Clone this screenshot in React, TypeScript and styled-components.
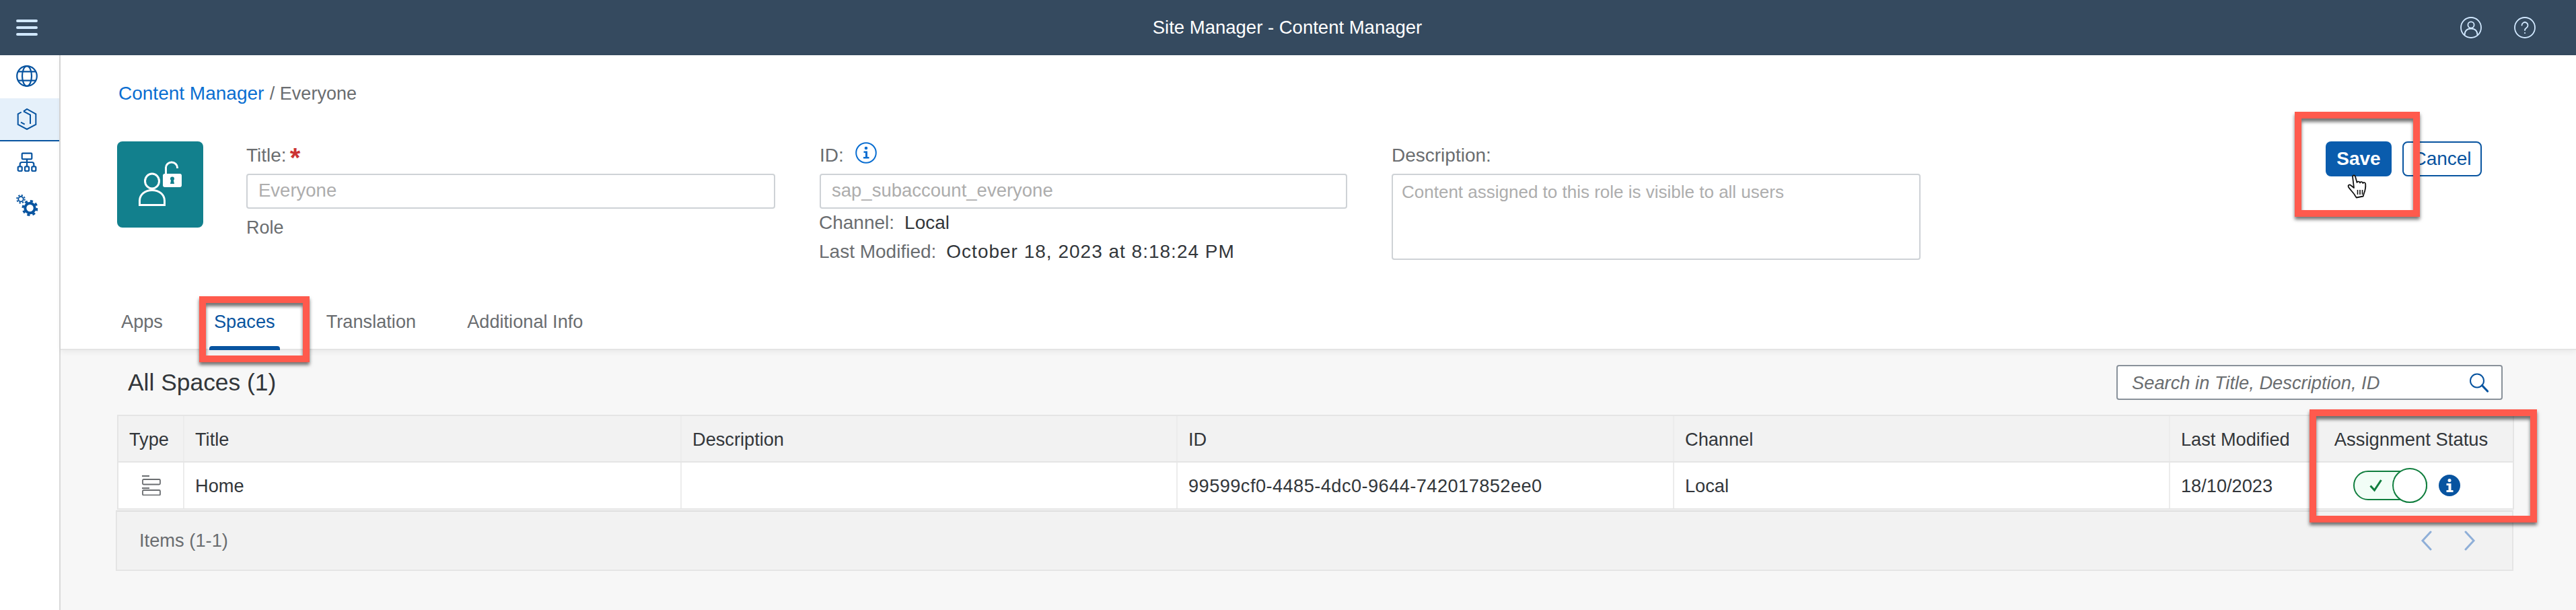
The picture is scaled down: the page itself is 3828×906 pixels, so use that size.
import React from "react";
import styled, { createGlobalStyle } from "styled-components";

const GlobalStyle = createGlobalStyle`
  html, body { margin: 0; padding: 0; background: #f7f7f7; }
  body { font-family: "Liberation Sans", Arial, sans-serif; color: #32363a; }
  * { box-sizing: border-box; }
`;

const COLUMNS = "98px 739px 737px 738px 737px 209px 302px";

const Page = styled.div`
  position: relative;
  width: 3828px;
  height: 906px;
  overflow: hidden;
  display: flex;
  flex-direction: column;
`;
const ShellBar = styled.header`
  flex: none;
  height: 82px;
  background: #354a5f;
  display: grid;
  grid-template-columns: 1fr auto 1fr;
  align-items: center;
  padding: 0 60px 0 24px;
`;
const ShellTitle = styled.div`
  text-align: center;
  font-size: 27.5px;
  color: #ffffff;
  padding-left: 34px;
`;
const ShellStart = styled.div`
  display: flex;
`;
const ShellIcons = styled.div`
  display: flex;
  justify-content: flex-end;
  gap: 48px;
`;
const Body = styled.div`
  flex: 1;
  display: flex;
  min-height: 0;
`;
const SideNav = styled.nav`
  flex: none;
  width: 90px;
  background: #fff;
  border-right: 2px solid #d9d9d9;
  display: flex;
  flex-direction: column;
`;
const NavItem = styled.div<{ $active?: boolean }>`
  height: 64px;
  display: flex;
  align-items: center;
  justify-content: center;
  padding-right: 8px;
  background: ${(p) => (p.$active ? "#e5f0fa" : "#fff")};
  border-bottom: 2px solid ${(p) => (p.$active ? "#0854a0" : "transparent")};
`;
const Main = styled.main`
  flex: 1;
  display: flex;
  flex-direction: column;
  min-width: 0;
`;
const TopSection = styled.section`
  flex: none;
  height: 438px;
  background: #fff;
  border-bottom: 2px solid #e4e4e4;
  box-shadow: 0 3px 8px rgba(0, 0, 0, 0.06);
  padding: 37px 140px 0 84px;
  display: flex;
  flex-direction: column;
  position: relative;
  z-index: 1;
`;
const Breadcrumb = styled.div`
  height: 40px;
  line-height: 40px;
  font-size: 27px;
  color: #6a6d70;
  padding-left: 2px;
`;
const CrumbLink = styled.span`
  color: #0a6ed1;
  font-size: 28px;
  margin-right: 1px;
`;
const FormRow = styled.div`
  margin-top: 51px;
  display: flex;
  align-items: flex-start;
`;
const Avatar = styled.div`
  flex: none;
  width: 128px;
  height: 128px;
  border-radius: 8px;
  background: #12808d;
  margin-right: 64px;
`;
const Field = styled.div<{ $w: number; $mr: number }>`
  flex: none;
  width: ${(p) => p.$w}px;
  margin-right: ${(p) => p.$mr}px;
  display: flex;
  flex-direction: column;
`;
const Label = styled.div`
  height: 40px;
  line-height: 40px;
  font-size: 28px;
  color: #6a6d70;
  margin-bottom: 8px;
  padding-top: 1px;
  display: flex;
  align-items: center;
`;
const Star = styled.span`
  color: #cc3333;
  font-weight: 700;
  font-size: 40px;
  line-height: 40px;
  margin-left: 5px;
  padding-top: 6px;
`;
const InfoWrap = styled.span`
  display: inline-flex;
  margin: -8px 0 0 17px;
`;
const InputBox = styled.div<{ $tall?: boolean }>`
  height: ${(p) => (p.$tall ? "128px" : "52px")};
  border: 2px solid #ced2d6;
  border-radius: 4px;
  background: #fff;
  padding: ${(p) => (p.$tall ? "6px 13px" : "0 16px")};
  font-size: ${(p) => (p.$tall ? "26px" : "27.5px")};
  line-height: ${(p) => (p.$tall ? "38px" : "46px")};
  color: #adadad;
  white-space: nowrap;
`;
const Caption = styled.div`
  margin-top: 8px;
  height: 40px;
  line-height: 40px;
  font-size: 27px;
  color: #6a6d70;
`;
const MetaLine = styled.div<{ $gap: number }>`
  margin-top: ${(p) => p.$gap}px;
  height: 40px;
  line-height: 42px;
  font-size: 28px;
  color: #6a6d70;
  white-space: nowrap;
  margin-left: -1px;
`;
const MetaValue = styled.span<{ $wide?: boolean }>`
  color: #32363a;
  margin-left: 15px;
  font-size: 28px;
  letter-spacing: ${(p) => (p.$wide ? "1px" : "0")};
`;
const Actions = styled.div`
  margin-left: auto;
  display: flex;
  gap: 16px;
`;
const SaveButton = styled.button`
  width: 98px;
  height: 52px;
  border: none;
  border-radius: 8px;
  background: #0a5cad;
  color: #fff;
  font: 700 28px "Liberation Sans", Arial, sans-serif;
  padding: 0;
`;
const CancelButton = styled.button`
  width: 118px;
  height: 52px;
  border: 2px solid #0854a0;
  border-radius: 8px;
  background: #fff;
  color: #0854a0;
  font: 400 28px "Liberation Sans", Arial, sans-serif;
  padding: 0;
`;
const TabBar = styled.div`
  position: absolute;
  left: 83px;
  bottom: 0;
  display: flex;
  gap: 62px;
`;
const Tab = styled.div<{ $active?: boolean }>`
  position: relative;
  height: 87px;
  padding: 27px 7px 0;
  font-size: 27.2px;
  line-height: 40px;
  color: ${(p) => (p.$active ? "#0854a0" : "#6a6d70")};
  ${(p) =>
    p.$active &&
    `&::after {
      content: "";
      position: absolute;
      left: 0;
      right: 0;
      bottom: -2px;
      height: 6px;
      background: #0854a0;
      border-radius: 4px 4px 0 0;
    }`}
`;
const Content = styled.section`
  flex: 1;
  background: #f7f7f7;
  padding: 22px 94px 0 84px;
`;
const Toolbar = styled.div`
  height: 52px;
  display: flex;
  align-items: center;
  justify-content: space-between;
  padding: 0 15px 0 16px;
  margin-bottom: 22px;
`;
const ListTitle = styled.h2`
  margin: 0;
  font-size: 35.4px;
  font-weight: 400;
  color: #32363a;
`;
const SearchBox = styled.div`
  width: 574px;
  height: 52px;
  border: 2px solid #89919a;
  border-radius: 4px;
  background: #fff;
  display: flex;
  align-items: center;
  justify-content: space-between;
  padding: 1px 18px 0 21px;
  font-size: 27.3px;
  font-style: italic;
  color: #6a6d70;
`;
const Table = styled.div`
  width: 3560px;
  border-top: 2px solid #e5e5e5;
  border-left: 2px solid #e5e5e5;
`;
const Row = styled.div<{ $head?: boolean }>`
  display: grid;
  grid-template-columns: ${COLUMNS};
  height: ${(p) => (p.$head ? "69px" : "70px")};
  margin-right: -2px;
  background: ${(p) => (p.$head ? "#f2f2f2" : "#fff")};
  border-bottom: 2px solid #e5e5e5;
`;
const Cell = styled.div<{ $last?: boolean; $center?: boolean; $wide?: boolean }>`
  display: flex;
  align-items: center;
  justify-content: ${(p) => (p.$center ? "center" : "flex-start")};
  padding: 2px 0 0 16px;
  font-size: 27.2px;
  letter-spacing: ${(p) => (p.$wide ? "0.45px" : "0")};
  color: #32363a;
  white-space: nowrap;
  border-right: 2px solid ${(p) => (p.$last ? "#e5e5e5" : "#ececec")};
`;
const StatusHead = styled(Cell)`
  padding: 2px 2px 0 0;
  font-size: 27.4px;
`;
const StatusCell = styled(Cell)`
  padding: 0 0 0 63px;
  gap: 17px;
`;
const IconCell = styled(Cell)`
  padding: 0 0 0 2px;
`;
const Toggle = styled.div`
  position: relative;
  width: 110px;
  height: 44px;
  margin-right: 0;
  border: 2px solid #107e3e;
  border-radius: 22px;
  background: #f1fdf6;
  display: flex;
  align-items: center;
  padding-left: 22px;
`;
const ToggleKnob = styled.div`
  position: absolute;
  right: -2px;
  top: -6px;
  width: 52px;
  height: 52px;
  border-radius: 50%;
  border: 2px solid #107e3e;
  background: #fff;
`;
const TableFooter = styled.div`
  width: 3563px;
  margin-left: -2px;
  height: 90px;
  margin-top: 1px;
  background: #f2f2f2;
  border: 2px solid #e5e5e5;
  border-top-color: #dedede;
  display: flex;
  align-items: center;
  justify-content: space-between;
  padding: 0 54px 0 33px;
  font-size: 27.3px;
  color: #6a6d70;
`;
const Pager = styled.div`
  display: flex;
  gap: 46px;
`;
const Highlight = styled.div<{ $x: number; $y: number; $w: number; $h: number }>`
  position: absolute;
  left: ${(p) => p.$x}px;
  top: ${(p) => p.$y}px;
  width: ${(p) => p.$w}px;
  height: ${(p) => p.$h}px;
  border: 10px solid #ff5a4d;
  box-shadow: 0 4px 5px rgba(0, 0, 0, 0.55), inset 0 5px 5px rgba(0, 0, 0, 0.55);
  z-index: 5;
  pointer-events: none;
`;
const Pointer = styled.svg`
  position: absolute;
  left: 3487px;
  top: 259px;
  z-index: 6;
`;

const blue = "#0854a0";
const pale = "#d1e8ff";

const Hamburger = () => (
  <svg width="32" height="24" viewBox="0 0 32 24" fill="none" stroke={pale} strokeWidth="4" strokeLinecap="round">
    <path d="M2 2h28M2 12h28M2 22h28" />
  </svg>
);
const PersonIcon = () => (
  <svg width="32" height="32" viewBox="0 0 32 32" fill="none" stroke={pale} strokeWidth="1.8">
    <circle cx="16" cy="16" r="15" />
    <circle cx="16" cy="12" r="4.6" />
    <path d="M6.5 27c0-6 3.5-9.5 9.5-9.5s9.5 3.5 9.5 9.5" />
  </svg>
);
const HelpIcon = () => (
  <svg width="32" height="32" viewBox="0 0 32 32" fill="none" stroke={pale} strokeWidth="1.8" strokeLinecap="round">
    <circle cx="16" cy="16" r="15" />
    <path d="M11.5 12.5a4.5 4.5 0 1 1 7 3.8c-1.7 1.1-2.5 2-2.5 3.7" />
    <circle cx="16" cy="24" r="1.1" fill={pale} stroke="none" />
  </svg>
);
const GlobeIcon = () => (
  <svg width="32" height="32" viewBox="0 0 32 32" fill="none" stroke={blue} strokeWidth="2.2">
    <circle cx="16" cy="16" r="14.8" />
    <ellipse cx="16" cy="16" rx="7" ry="14.8" />
    <path d="M2.8 9.4h26.4M2.8 22.6h26.4" />
  </svg>
);
const PackageIcon = () => (
  <svg width="32" height="32" viewBox="0 0 32 32" fill="none" stroke={blue} strokeWidth="2">
    <path d="M11 4.3 16 1l13.3 7.4v15.4L16 31 2.7 23.8V8.4l5-2.9" />
    <path d="M11 4.3 21 9.7V23M7 20.7l5.7 3" />
  </svg>
);
const OrgIcon = () => (
  <svg width="32" height="32" viewBox="0 0 32 32" fill="none" stroke={blue} strokeWidth="2.2" strokeLinejoin="round">
    <rect x="8.7" y="2.7" width="14.6" height="8.6" rx="1" />
    <path d="M16 11.3V22M5.7 22v-3a3 3 0 0 1 3-3h14.6a3 3 0 0 1 3 3v3" />
    <rect x="2.7" y="22.3" width="6" height="6.7" rx="1.5" />
    <rect x="13" y="22.3" width="6" height="6.7" rx="1.5" />
    <rect x="23.3" y="22.3" width="6" height="6.7" rx="1.5" />
  </svg>
);
const GearsIcon = () => (
  <svg width="32" height="32" viewBox="0 0 32 32" fill="none" stroke={blue}>
    <circle cx="20.5" cy="20" r="7.2" strokeWidth="4" />
    <circle cx="20.5" cy="20" r="10.4" strokeWidth="3.2" strokeDasharray="4.1 4.07" />
    <circle cx="7" cy="6.7" r="3.7" strokeWidth="1.9" />
    <circle cx="7" cy="6.7" r="5.8" strokeWidth="2" strokeDasharray="2.3 2.25" />
  </svg>
);
const RoleGlyph = () => (
  <svg width="128" height="128" viewBox="0 0 128 128" fill="none" stroke="#fff" strokeWidth="3">
    <ellipse cx="52" cy="59" rx="10.5" ry="11" />
    <path d="M33.5 94.5V88c0-9 8-15.5 18.5-15.5S70.500 79 70.500 88v6.500z" />
    <path d="M72.500 48v-9a8.500 8 0 0 1 17 0v1" />
    <rect x="68" y="48" width="28" height="20" rx="3" fill="#fff" stroke="none" />
    <circle cx="82" cy="55.500" r="3" fill="#12808d" stroke="none" />
    <path d="M80.500 56h3l1.500 7h-6z" fill="#12808d" stroke="none" />
  </svg>
);
const InfoOutline = () => (
  <svg width="32" height="32" viewBox="0 0 32 32" fill="none">
    <circle cx="16" cy="16" r="14.800" stroke="#0a6ed1" strokeWidth="2" />
    <circle cx="16" cy="9" r="2.300" fill="#0a6ed1" />
    <path d="M12.500 13.500h5.500V22h2.500v2.500h-8.500V22H15v-6h-2.500z" fill="#0a6ed1" />
  </svg>
);
const InfoSolid = () => (
  <svg width="32" height="32" viewBox="0 0 32 32">
    <circle cx="16" cy="16" r="16" fill={blue} />
    <circle cx="16" cy="8.500" r="2.500" fill="#fff" />
    <path d="M11.500 13h7v10h3v3h-10v-3h3v-7h-3z" fill="#fff" />
  </svg>
);
const SearchIcon = () => (
  <svg width="30" height="30" viewBox="0 0 30 30" fill="none" stroke={blue} strokeLinecap="round">
    <circle cx="12" cy="11.500" r="10" strokeWidth="2" />
    <path d="M19.500 18.500 27.500 27" strokeWidth="3.200" />
  </svg>
);
const SpaceIcon = () => (
  <svg width="28" height="30" viewBox="0 0 28 30" fill="none" stroke="#6a6d70" strokeWidth="1.800">
    <path d="M0 1h11M0 19h11" />
    <rect x="1" y="6" width="26" height="7.500" rx="1.500" />
    <rect x="1" y="22" width="26" height="7.500" rx="1.500" />
  </svg>
);
const CheckIcon = () => (
  <svg width="20" height="20" viewBox="0 0 20 20" fill="none" stroke="#107e3e" strokeWidth="3">
    <path d="M1.500 10.500 7.500 17 17.500 2" />
  </svg>
);
const Chevron = ({ left }: { left?: boolean }) => (
  <svg width="18" height="30" viewBox="0 0 18 30" fill="none" stroke="#8fafd8" strokeWidth="3" strokeLinecap="round">
    <path d={left ? "M15 2 3 15l12 13" : "M3 2l12 13L3 28"} />
  </svg>
);
const HandPointer = () => (
  <Pointer width="34" height="38" viewBox="0 0 34 38">
    <path
      d="M9 3c0-2 3.500-2 4 0l2.500 9c.5-2 4-2 4.500.5.500-2 3.800-1.800 4.300.5.700-1.500 3.700-1.200 3.900 1 .5 5-.5 10-2.500 15l-1 3.500-10 2-2-3C11 28 6 23.500 3 19c-1.500-2.500 1-4.500 3-3l5 4z"
      fill="#fff"
      stroke="#111"
      strokeWidth="1.800"
      strokeLinejoin="round"
    />
    <path d="M16.500 23v7M20 23v7M23.500 23v7" stroke="#111" strokeWidth="1.600" />
  </Pointer>
);

const headers = ["Type", "Title", "Description", "ID", "Channel", "Last Modified"];

export default function App() {
  return (
    <>
      <GlobalStyle />
      <Page>
        <ShellBar>
          <ShellStart><Hamburger /></ShellStart>
          <ShellTitle>Site Manager - Content Manager</ShellTitle>
          <ShellIcons>
            <PersonIcon />
            <HelpIcon />
          </ShellIcons>
        </ShellBar>
        <Body>
          <SideNav>
            <NavItem><GlobeIcon /></NavItem>
            <NavItem $active><PackageIcon /></NavItem>
            <NavItem><OrgIcon /></NavItem>
            <NavItem><GearsIcon /></NavItem>
          </SideNav>
          <Main>
            <TopSection>
              <Breadcrumb>
                <CrumbLink>Content Manager</CrumbLink> / Everyone
              </Breadcrumb>
              <FormRow>
                <Avatar><RoleGlyph /></Avatar>
                <Field $w={786} $mr={66}>
                  <Label>Title:<Star>*</Star></Label>
                  <InputBox>Everyone</InputBox>
                  <Caption>Role</Caption>
                </Field>
                <Field $w={784} $mr={66}>
                  <Label>ID:<InfoWrap><InfoOutline /></InfoWrap></Label>
                  <InputBox>sap_subaccount_everyone</InputBox>
                  <MetaLine $gap={0}>Channel:<MetaValue>Local</MetaValue></MetaLine>
                  <MetaLine $gap={3}>Last Modified:<MetaValue $wide>October 18, 2023 at 8:18:24 PM</MetaValue></MetaLine>
                </Field>
                <Field $w={786} $mr={0}>
                  <Label>Description:</Label>
                  <InputBox $tall>Content assigned to this role is visible to all users</InputBox>
                </Field>
                <Actions>
                  <SaveButton>Save</SaveButton>
                  <CancelButton>Cancel</CancelButton>
                </Actions>
              </FormRow>
              <TabBar>
                <Tab>Apps</Tab>
                <Tab $active>Spaces</Tab>
                <Tab>Translation</Tab>
                <Tab>Additional Info</Tab>
              </TabBar>
            </TopSection>
            <Content>
              <Toolbar>
                <ListTitle>All Spaces (1)</ListTitle>
                <SearchBox>
                  Search in Title, Description, ID
                  <SearchIcon />
                </SearchBox>
              </Toolbar>
              <Table>
                <Row $head>
                  {headers.map((h) => (
                    <Cell key={h}>{h}</Cell>
                  ))}
                  <StatusHead $last $center>Assignment Status</StatusHead>
                </Row>
                <Row>
                  <IconCell $center><SpaceIcon /></IconCell>
                  <Cell>Home</Cell>
                  <Cell />
                  <Cell $wide>99599cf0-4485-4dc0-9644-742017852ee0</Cell>
                  <Cell>Local</Cell>
                  <Cell>18/10/2023</Cell>
                  <StatusCell $last>
                    <Toggle>
                      <CheckIcon />
                      <ToggleKnob />
                    </Toggle>
                    <InfoSolid />
                  </StatusCell>
                </Row>
              </Table>
              <TableFooter>
                Items (1-1)
                <Pager>
                  <Chevron left />
                  <Chevron />
                </Pager>
              </TableFooter>
            </Content>
          </Main>
        </Body>
        <Highlight $x={3410} $y={166} $w={186} $h={156} />
        <Highlight $x={296} $y={440} $w={164} $h={98} />
        <Highlight $x={3432} $y={608} $w={338} $h={168} />
        <HandPointer />
      </Page>
    </>
  );
}
